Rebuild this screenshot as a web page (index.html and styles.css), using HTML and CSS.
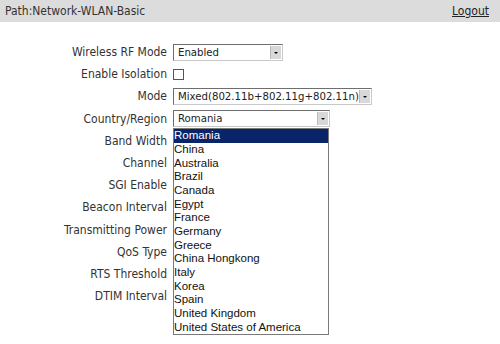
FILE: index.html
```html
<!DOCTYPE html>
<html lang="en">
<head>
    <meta charset="UTF-8">
    <title>Network-WLAN-Basic</title>
    <link rel="stylesheet" href="styles.css">
</head>
<body>
    <div class="topbar">
        <span class="path">Path:Network-WLAN-Basic</span>
        <a class="logout" href="#">Logout</a>
    </div>

    <div class="form">
        <div class="label">Wireless RF Mode</div>
        <div class="field"><div class="select w-rf">Enabled<span class="arrow"></span></div></div>

        <div class="label">Enable Isolation</div>
        <div class="field"><span class="check"></span></div>

        <div class="label">Mode</div>
        <div class="field"><div class="select w-mode">Mixed(802.11b+802.11g+802.11n)<span class="arrow"></span></div></div>

        <div class="label">Country/Region</div>
        <div class="field">
            <div class="select w-country">Romania<span class="arrow"></span>
                <ul class="dropdown">
                    <li class="selected">Romania</li>
                    <li>China</li>
                    <li>Australia</li>
                    <li>Brazil</li>
                    <li>Canada</li>
                    <li>Egypt</li>
                    <li>France</li>
                    <li>Germany</li>
                    <li>Greece</li>
                    <li>China Hongkong</li>
                    <li>Italy</li>
                    <li>Korea</li>
                    <li>Spain</li>
                    <li>United Kingdom</li>
                    <li>United States of America</li>
                </ul>
            </div>
        </div>

        <div class="label">Band Width</div>
        <div class="field"></div>

        <div class="label">Channel</div>
        <div class="field"></div>

        <div class="label">SGI Enable</div>
        <div class="field"></div>

        <div class="label">Beacon Interval</div>
        <div class="field"></div>

        <div class="label">Transmitting Power</div>
        <div class="field"></div>

        <div class="label">QoS Type</div>
        <div class="field"></div>

        <div class="label">RTS Threshold</div>
        <div class="field"></div>

        <div class="label">DTIM Interval</div>
        <div class="field"></div>
    </div>
</body>
</html>
```

FILE: styles.css
```css
html, body {
    min-height: 344px;
}
body {
    margin: 0;
    font-family: "DejaVu Sans Condensed", "DejaVu Sans", sans-serif;
    font-size: 11px;
    color: #222;
    background: #fff;
}
.topbar {
    height: 22px;
    background: #dcdcdc;
    display: flex;
    align-items: center;
    justify-content: space-between;
    padding: 0 11px 0 5px;
    font-size: 12px;
}
.path {
    color: #333;
}
.logout {
    color: #222;
    text-decoration: underline;
}
.form {
    display: grid;
    grid-template-columns: 167px 1fr;
    grid-auto-rows: 22.2px;
    column-gap: 6px;
    margin-top: 19px;
    padding-bottom: 40px;
    font-size: 12px;
}
.label {
    display: flex;
    align-items: center;
    justify-content: flex-end;
    color: #333;
}
.field {
    display: flex;
    align-items: center;
}
.select {
    position: relative;
    height: 15px;
    line-height: 15px;
    border: 1px solid #6e6e6e;
    border-right-color: #c8c8c8;
    border-bottom-color: #c8c8c8;
    background: #fff;
    padding-left: 4px;
    font-size: 11.3px;
    white-space: nowrap;
}
.w-rf { width: 104px; }
.w-mode { width: 193px; }
.w-country { width: 151px; }
.arrow {
    position: absolute;
    right: 1px;
    top: 1px;
    width: 10px;
    height: 13px;
    background: #d8d8d8;
    border-left: 1px solid #bbb;
}
.arrow::after {
    content: "";
    position: absolute;
    left: 3px;
    top: 6px;
    border-left: 2px solid transparent;
    border-right: 2px solid transparent;
    border-top: 2px solid #000;
}
.check {
    width: 9px;
    height: 9px;
    border: 1px solid #555;
    background: #fff;
}
.dropdown {
    position: absolute;
    left: -1px;
    top: 17px;
    z-index: 2;
    width: 154px;
    margin: 0;
    padding: 0;
    list-style: none;
    background: #fff;
    border: 1px solid #7a7a7a;
    font-family: "Liberation Sans", Arial, sans-serif;
    font-size: 11.5px;
    color: #111;
}
.dropdown li {
    height: 13.7px;
    line-height: 13.7px;
    padding-left: 0;
}
.dropdown .selected {
    background: #0a246a;
    color: #fff;
}
```
